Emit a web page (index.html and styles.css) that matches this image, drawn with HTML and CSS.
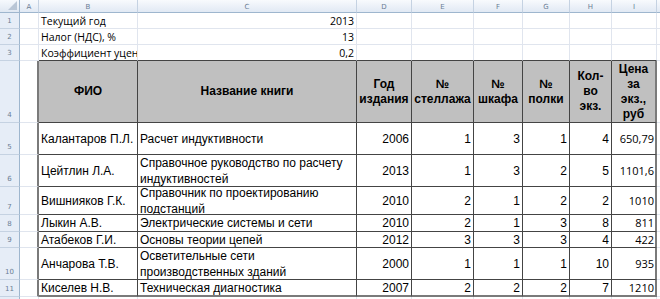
FILE: index.html
```html
<!DOCTYPE html>
<html lang="ru">
<head>
<meta charset="utf-8">
<title>Лист</title>
<link rel="stylesheet" href="styles.css">
</head>
<body>
<div class="sheet">
  <!-- column headers -->
  <div class="corner"><span class="tri"></span></div>
  <div class="ch">A</div><div class="ch">B</div><div class="ch">C</div><div class="ch">D</div><div class="ch">E</div><div class="ch">F</div><div class="ch">G</div><div class="ch">H</div><div class="ch">I</div><div class="ch last"></div>

  <!-- row 1 -->
  <div class="rh">1</div>
  <div class="c"></div><div class="c cal">Текущий год</div><div class="c cal r">2013</div><div class="c"></div><div class="c"></div><div class="c"></div><div class="c"></div><div class="c"></div><div class="c"></div><div class="c"></div>
  <!-- row 2 -->
  <div class="rh">2</div>
  <div class="c"></div><div class="c cal">Налог (НДС), %</div><div class="c cal r">13</div><div class="c"></div><div class="c"></div><div class="c"></div><div class="c"></div><div class="c"></div><div class="c"></div><div class="c"></div>
  <!-- row 3 -->
  <div class="rh">3</div>
  <div class="c"></div><div class="c cal top-edge">Коэффициент уцен</div><div class="c cal r top-edge">0,2</div><div class="c top-edge"></div><div class="c top-edge"></div><div class="c top-edge"></div><div class="c top-edge"></div><div class="c top-edge"></div><div class="c top-edge"></div><div class="c"></div>

  <!-- row 4 header -->
  <div class="rh">4</div>
  <div class="c left-edge"></div>
  <div class="t th">ФИО</div>
  <div class="t th">Название книги</div>
  <div class="t th">Год<br>издания</div>
  <div class="t th">№<br>стеллажа</div>
  <div class="t th">№<br>шкафа</div>
  <div class="t th">№<br>полки</div>
  <div class="t th">Кол-<br>во<br>экз.</div>
  <div class="t th rc">Цена<br>за<br>экз.,<br>руб</div>
  <div class="c"></div>

  <!-- row 5 -->
  <div class="rh">5</div>
  <div class="c left-edge"></div>
  <div class="t">Калантаров П.Л.</div>
  <div class="t">Расчет индуктивности</div>
  <div class="t r">2006</div><div class="t r">1</div><div class="t r">3</div><div class="t r">1</div><div class="t r">4</div>
  <div class="t r rc price">650,79</div>
  <div class="c"></div>

  <!-- row 6 -->
  <div class="rh">6</div>
  <div class="c left-edge"></div>
  <div class="t">Цейтлин Л.А.</div>
  <div class="t">Справочное руководство по расчету<br>индуктивностей</div>
  <div class="t r">2013</div><div class="t r">1</div><div class="t r">3</div><div class="t r">2</div><div class="t r">5</div>
  <div class="t r rc price">1101,6</div>
  <div class="c"></div>

  <!-- row 7 -->
  <div class="rh">7</div>
  <div class="c left-edge"></div>
  <div class="t">Вишнияков Г.К.</div>
  <div class="t">Справочник по проектированию<br>подстанций</div>
  <div class="t r">2010</div><div class="t r">2</div><div class="t r">1</div><div class="t r">2</div><div class="t r">2</div>
  <div class="t r rc price">1010</div>
  <div class="c"></div>

  <!-- row 8 -->
  <div class="rh">8</div>
  <div class="c left-edge"></div>
  <div class="t">Лыкин А.В.</div>
  <div class="t">Электрические системы и сети</div>
  <div class="t r">2010</div><div class="t r">2</div><div class="t r">1</div><div class="t r">3</div><div class="t r">8</div>
  <div class="t r rc price">811</div>
  <div class="c"></div>

  <!-- row 9 -->
  <div class="rh">9</div>
  <div class="c left-edge"></div>
  <div class="t">Атабеков Г.И.</div>
  <div class="t">Основы теории цепей</div>
  <div class="t r">2012</div><div class="t r">3</div><div class="t r">3</div><div class="t r">3</div><div class="t r">4</div>
  <div class="t r rc price">422</div>
  <div class="c"></div>

  <!-- row 10 -->
  <div class="rh">10</div>
  <div class="c left-edge"></div>
  <div class="t">Анчарова Т.В.</div>
  <div class="t">Осветительные сети<br>производственных зданий</div>
  <div class="t r">2000</div><div class="t r">1</div><div class="t r">1</div><div class="t r">1</div><div class="t r">10</div>
  <div class="t r rc price">935</div>
  <div class="c"></div>

  <!-- row 11 -->
  <div class="rh">11</div>
  <div class="c left-edge"></div>
  <div class="t bc">Киселев Н.В.</div>
  <div class="t bc">Техническая диагностика</div>
  <div class="t r bc">2007</div><div class="t r bc">2</div><div class="t r bc">2</div><div class="t r bc">2</div><div class="t r bc">7</div>
  <div class="t r rc bc price">1210</div>
  <div class="c"></div>

  <!-- row 12 (partial) -->
  <div class="rh"></div>
  <div class="c"></div><div class="c"></div><div class="c"></div><div class="c"></div><div class="c"></div><div class="c"></div><div class="c"></div><div class="c"></div><div class="c"></div><div class="c"></div>
</div>
</body>
</html>
```

FILE: styles.css
```css
html, body {
  margin: 0;
  padding: 0;
  background: #ffffff;
}

.sheet {
  width: 660px;
  height: 299px;
  overflow: hidden;
  display: grid;
  grid-template-columns: 20px 19px 99px 219px 55px 62px 49px 47px 42px 45px 1fr;
  grid-template-rows: 13px 16px 16px 16px 62px 32px 32px 28px 17px 16px 32px 17px 10px;
  font-family: "Liberation Sans", Arial, sans-serif;
  font-size: 12px;
  color: #000;
}

.sheet > div {
  box-sizing: border-box;
  min-width: 0;
}

.corner {
  position: relative;
  background: linear-gradient(#f6f9fd, #dfe7f2);
  border-right: 1px solid #9eb6ce;
  border-bottom: 1px solid #9eb6ce;
}

.tri {
  position: absolute;
  right: 2px;
  bottom: 2px;
  width: 0;
  height: 0;
  border-left: 9px solid transparent;
  border-bottom: 9px solid #b9c6d6;
}

.ch {
  background: linear-gradient(#f8fafd, #e1e9f4);
  border-right: 1px solid #c5d2e2;
  border-bottom: 1px solid #9eb6ce;
  font-family: "DejaVu Sans", sans-serif;
  font-size: 7px;
  color: #6a7d95;
  display: flex;
  align-items: center;
  justify-content: center;
  padding-top: 1px;
}

.ch.last {
  border-right: none;
}

.rh {
  background: #e6edf7;
  border-right: 1px solid #9eb6ce;
  border-bottom: 1px solid #c5d2e2;
  font-family: "DejaVu Sans", sans-serif;
  font-size: 7px;
  color: #6a7d95;
  display: flex;
  align-items: flex-end;
  justify-content: center;
  padding-bottom: 3px;
}

.c {
  border-right: 1px solid #e0e5ee;
  border-bottom: 1px solid #e0e5ee;
  display: flex;
  align-items: center;
  padding: 0 2px;
  white-space: nowrap;
  overflow: hidden;
}

.cal {
  font-family: "Open Sans", "Noto Sans", sans-serif;
  font-size: 10.5px;
}

.r {
  justify-content: flex-end;
  text-align: right;
}

.top-edge {
  border-bottom: 1px solid #444;
}

.left-edge {
  border-right: 2px solid #7a7a7a;
}

.t {
  border-right: 1px solid #444;
  border-bottom: 1px solid #444;
  display: flex;
  align-items: center;
  padding: 0 2px 0 2px;
  line-height: 16px;
  white-space: nowrap;
  overflow: hidden;
}

.th {
  background: #c0c0c0;
  font-weight: bold;
  justify-content: center;
  text-align: center;
  line-height: 15px;
  padding: 0;
}

.rc {
  border-right: 2px solid #7a7a7a;
}

.bc {
  border-bottom: 2px solid #7a7a7a;
}

.price {
  font-family: "Open Sans", "Noto Sans", sans-serif;
  font-size: 11px;
  padding-right: 1px;
}
```
